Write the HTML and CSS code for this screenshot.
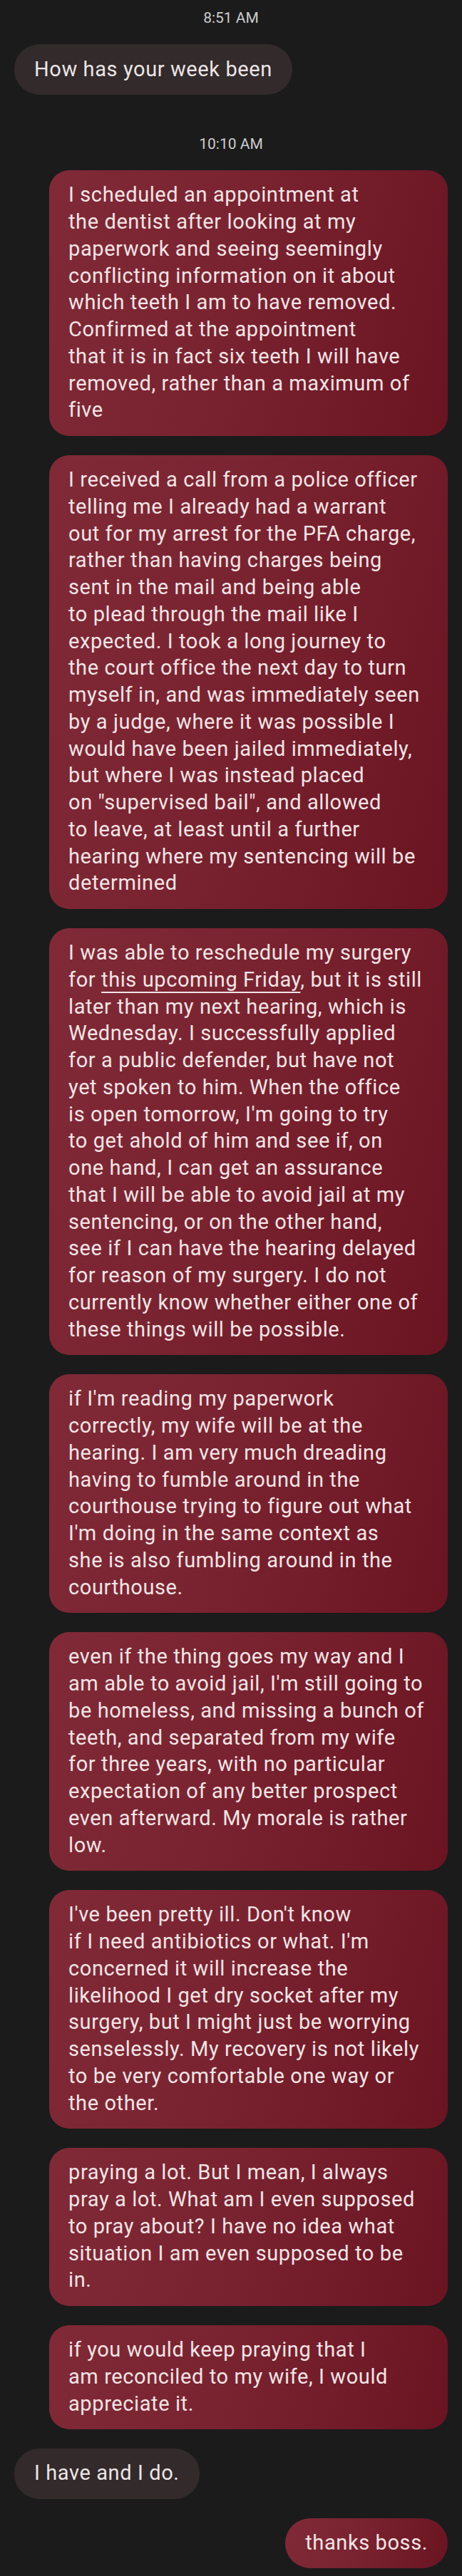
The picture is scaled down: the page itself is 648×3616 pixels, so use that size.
FILE: index.html
```html
<!DOCTYPE html>
<html lang="en">
<head>
<meta charset="utf-8">
<title>Messages</title>
<link rel="stylesheet" href="styles.css">
</head>
<body>
<main class="thread">
  <div class="stamp first">8:51 AM</div>
  <div class="msg in">How has your week been</div>

  <div class="stamp second">10:10 AM</div>
  <div class="group">
    <div class="msg out long">I scheduled an appointment at<br>the dentist after looking at my<br>paperwork and seeing seemingly<br>conflicting information on it about<br>which teeth I am to have removed.<br>Confirmed at the appointment<br>that it is in fact six teeth I will have<br>removed, rather than a maximum of<br>five</div>

    <div class="msg out long">I received a call from a police officer<br>telling me I already had a warrant<br>out for my arrest for the PFA charge,<br>rather than having charges being<br>sent in the mail and being able<br>to plead through the mail like I<br>expected. I took a long journey to<br>the court office the next day to turn<br>myself in, and was immediately seen<br>by a judge, where it was possible I<br>would have been jailed immediately,<br>but where I was instead placed<br>on "supervised bail", and allowed<br>to leave, at least until a further<br>hearing where my sentencing will be<br>determined</div>

    <div class="msg out long">I was able to reschedule my surgery<br>for <span class="link">this upcoming Friday</span>, but it is still<br>later than my next hearing, which is<br>Wednesday. I successfully applied<br>for a public defender, but have not<br>yet spoken to him. When the office<br>is open tomorrow, I'm going to try<br>to get ahold of him and see if, on<br>one hand, I can get an assurance<br>that I will be able to avoid jail at my<br>sentencing, or on the other hand,<br>see if I can have the hearing delayed<br>for reason of my surgery. I do not<br>currently know whether either one of<br>these things will be possible.</div>

    <div class="msg out long">if I'm reading my paperwork<br>correctly, my wife will be at the<br>hearing. I am very much dreading<br>having to fumble around in the<br>courthouse trying to figure out what<br>I'm doing in the same context as<br>she is also fumbling around in the<br>courthouse.</div>

    <div class="msg out long">even if the thing goes my way and I<br>am able to avoid jail, I'm still going to<br>be homeless, and missing a bunch of<br>teeth, and separated from my wife<br>for three years, with no particular<br>expectation of any better prospect<br>even afterward. My morale is rather<br>low.</div>

    <div class="msg out long">I've been pretty ill. Don't know<br>if I need antibiotics or what. I'm<br>concerned it will increase the<br>likelihood I get dry socket after my<br>surgery, but I might just be worrying<br>senselessly. My recovery is not likely<br>to be very comfortable one way or<br>the other.</div>

    <div class="msg out long">praying a lot. But I mean, I always<br>pray a lot. What am I even supposed<br>to pray about? I have no idea what<br>situation I am even supposed to be<br>in.</div>

    <div class="msg out long">if you would keep praying that I<br>am reconciled to my wife, I would<br>appreciate it.</div>

    <div class="msg in">I have and I do.</div>

    <div class="msg out">thanks boss.</div>
  </div>
</main>
</body>
</html>
```

FILE: styles.css
```css
html, body {
  margin: 0;
  padding: 0;
  background: #1b1b1b;
}

.thread {
  display: flex;
  flex-direction: column;
  padding: 12px 20px 0;
  font-family: Roboto, "Noto Sans", sans-serif;
  min-height: 3616px;
  box-sizing: border-box;
}

.stamp {
  align-self: center;
  color: #cdcdcd;
  font-size: 21px;
  line-height: 26px;
}

.stamp.first {
  margin-bottom: 24px;
}

.stamp.second {
  margin-top: 56px;
  margin-bottom: 24px;
}

.group {
  display: flex;
  flex-direction: column;
  gap: 27px;
}

.msg {
  font-size: 29px;
  line-height: 37.75px;
  letter-spacing: 0.6px;
  padding: 16.5px 28px;
  border-radius: 35px;
  white-space: nowrap;
  box-sizing: border-box;
}

.msg.in {
  align-self: flex-start;
  background: #322a2b;
  color: #ece5e5;
}

.msg.out {
  align-self: flex-end;
  max-width: 559px;
  color: #f3e4e6;
  background: linear-gradient(105deg, #802a37 0%, #7a2330 45%, #6a1422 100%);
}

.msg.out.long {
  width: 559px;
  padding-left: 27px;
  padding-right: 27px;
  border-radius: 28px;
}

.link {
  text-decoration: underline;
  text-decoration-thickness: 1.5px;
  text-underline-offset: 7px;
}
```
